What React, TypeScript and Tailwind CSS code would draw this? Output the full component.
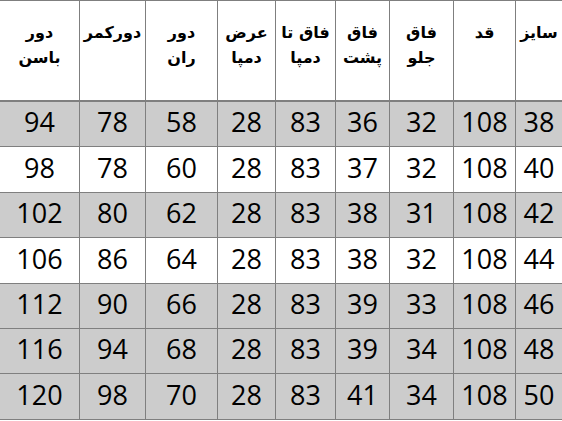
const headers = [
  ["سایز"],
  ["قد"],
  ["فاق", "جلو"],
  ["فاق", "پشت"],
  ["فاق تا", "دمپا"],
  ["عرض", "دمپا"],
  ["دور", "ران"],
  ["دورکمر"],
  ["دور", "باسن"],
];

// size, height, front rise, back rise, inseam, hem, thigh, waist, hip
const rows = [
  { shaded: true, values: [38, 108, 32, 36, 83, 28, 58, 78, 94] },
  { shaded: false, values: [40, 108, 32, 37, 83, 28, 60, 78, 98] },
  { shaded: true, values: [42, 108, 31, 38, 83, 28, 62, 80, 102] },
  { shaded: false, values: [44, 108, 32, 38, 83, 28, 64, 86, 106] },
  { shaded: true, values: [46, 108, 33, 39, 83, 28, 66, 90, 112] },
  { shaded: true, values: [48, 108, 34, 39, 83, 28, 68, 94, 116] },
  { shaded: true, values: [50, 108, 34, 41, 83, 28, 70, 98, 120] },
];

export default function App() {
  return (
    <div className="w-[562px] h-[421px] bg-white overflow-hidden">
      <div
        dir="rtl"
        className="grid grid-cols-[47px_62px_64px_54px_60px_58px_72px_66px_79px] border-t border-[#7f7f7f]"
      >
        {headers.map((lines, i) => (
          <div
            key={"h" + i}
            className={`h-[101px] border-b-2 border-[#7f7f7f] pt-[19px] text-center text-[16px] leading-[25px] font-bold text-black font-['DejaVu_Sans',sans-serif] whitespace-nowrap ${
              i < headers.length - 1 ? "border-l" : ""
            }`}
          >
            {lines.map((l) => (
              <div key={l}>{l}</div>
            ))}
          </div>
        ))}
        {rows.map((row, r) =>
          row.values.map((v, i) => (
            <div
              key={r + "-" + i}
              className={`h-[45.4px] border-b border-[#7f7f7f] flex items-center justify-center pb-[3px] text-[27px] text-black font-['Open_Sans',sans-serif] ${
                row.shaded ? "bg-[#cccccc]" : "bg-white"
              } ${i < row.values.length - 1 ? "border-l" : ""}`}
            >
              {v}
            </div>
          ))
        )}
      </div>
    </div>
  );
}
